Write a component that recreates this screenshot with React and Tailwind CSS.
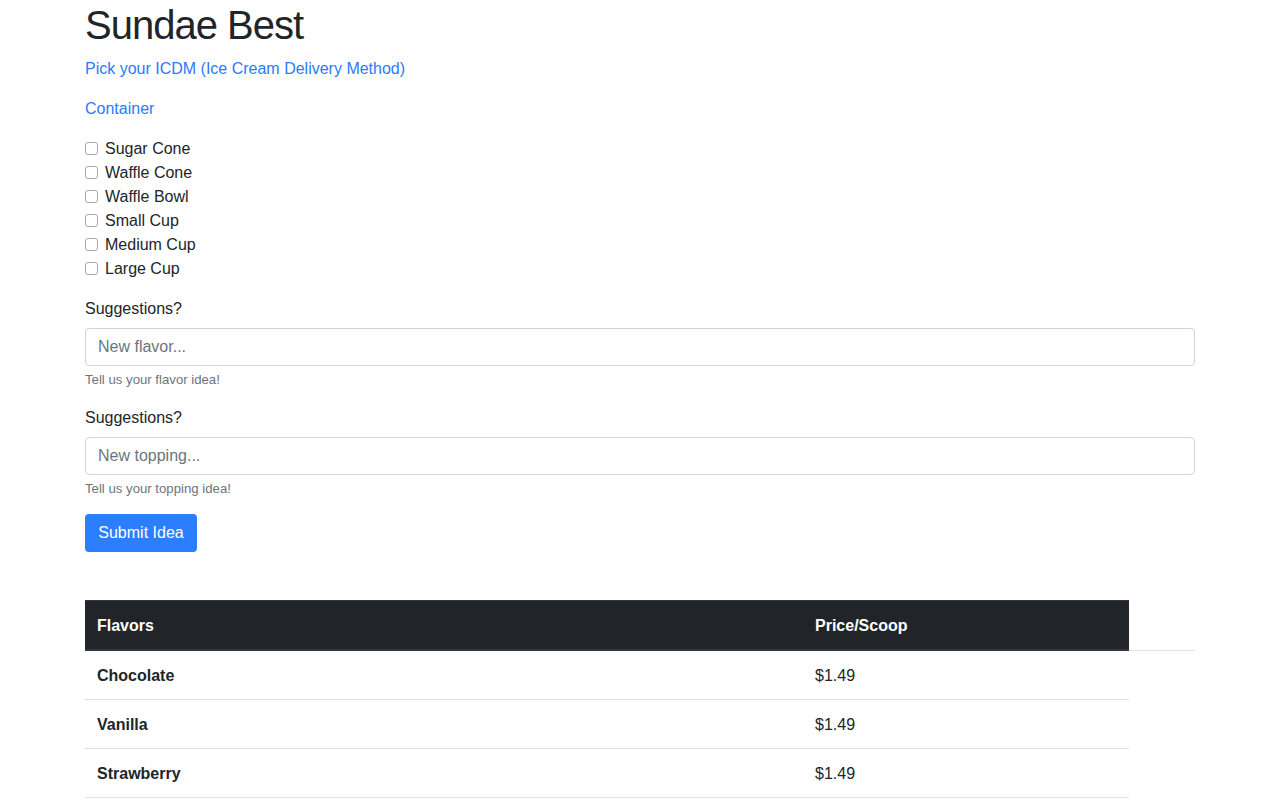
export default function App() {
  const containers = ['Sugar Cone', 'Waffle Cone', 'Waffle Bowl', 'Small Cup', 'Medium Cup', 'Large Cup'];
  const flavors = [
    { name: 'Chocolate', price: '$1.49' },
    { name: 'Vanilla', price: '$1.49' },
    { name: 'Strawberry', price: '$1.49' },
  ];

  return (
    <div className="min-h-screen bg-white text-[#212529] text-base font-['Liberation_Sans',Arial,sans-serif]">
      <div className="mx-auto w-[1140px] px-[15px]">
        <h1 className="text-[40px] leading-[48px] font-medium tracking-[-1px] relative top-px mb-2">Sundae Best</h1>
        <p className="text-[#2a7bff] leading-6 relative top-px mb-4">Pick your ICDM (Ice Cream Delivery Method)</p>
        <p className="text-[#2a7bff] leading-6 relative top-px mb-4">Container</p>

        <div className="mb-4">
          {containers.map((c) => (
            <label key={c} className="flex items-center h-6">
              <input
                type="checkbox"
                className="appearance-none w-[13px] h-[13px] rounded-[3px] border border-[#a8a8a8] bg-white mr-[7px]"
              />
              <span className="leading-6 relative top-px">{c}</span>
            </label>
          ))}
        </div>

        <div className="mb-4">
          <label className="block leading-6 mb-2 relative top-px">Suggestions?</label>
          <input
            type="text"
            placeholder="New flavor..."
            className="block w-full h-[38px] px-3 border border-[#ced4da] rounded-[4px] text-base placeholder:text-[#6c757d] outline-none"
          />
          <small className="block mt-1 text-[13.2px] leading-[19px] text-[#6c757d]">Tell us your flavor idea!</small>
        </div>

        <div className="mb-4">
          <label className="block leading-6 mb-2 relative top-px">Suggestions?</label>
          <input
            type="text"
            placeholder="New topping..."
            className="block w-full h-[38px] px-3 border border-[#ced4da] rounded-[4px] text-base placeholder:text-[#6c757d] outline-none"
          />
          <small className="block mt-1 text-[13.2px] leading-[19px] text-[#6c757d]">Tell us your topping idea!</small>
        </div>

        <button className="h-[38px] w-[112px] rounded-[4px] bg-[#2b7fff] text-white font-medium leading-6">Submit Idea</button>

        <div className="mt-12">
          <div className="flex">
            <div className="w-[1044px] flex bg-[#212529] text-white font-bold border-t border-b-2 border-[#32383e]">
              <div className="w-[718px] px-3 py-3 leading-6 relative top-px">Flavors</div>
              <div className="flex-1 px-3 py-3 leading-6 relative top-px">Price/Scoop</div>
            </div>
            <div className="flex-1 border-b border-[#dee2e6]"></div>
          </div>
          {flavors.map((f) => (
            <div key={f.name} className="w-[1044px] flex border-b border-[#dee2e6]">
              <div className="w-[718px] px-3 py-3 leading-6 font-bold relative top-px">{f.name}</div>
              <div className="flex-1 px-3 py-3 leading-6 relative top-px">{f.price}</div>
            </div>
          ))}
        </div>
      </div>
    </div>
  );
}
